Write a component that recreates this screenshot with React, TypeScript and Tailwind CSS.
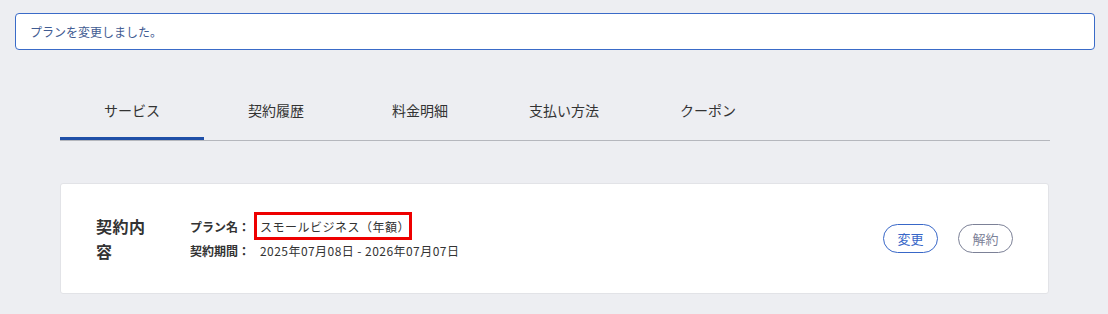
import React from 'react';

const tabs = ['サービス', '契約履歴', '料金明細', '支払い方法', 'クーポン'];

export default function App() {
  return (
    <div
      className="min-h-[314px] w-full bg-[#edeef2] pt-[13px] pl-[15px] pr-[13px] text-[#333]"
      style={{ fontFamily: '"Noto Sans CJK JP", "Noto Sans", sans-serif' }}
    >
      {/* 通知 */}
      <div className="flex h-[37px] items-center rounded-[4px] border border-[#3a6bc8] bg-white px-[14px] text-[12px] text-[#3f5b92]">
        プランを変更しました。
      </div>

      <div className="mx-[45px]">
        {/* タブ */}
        <div className="mt-[36px] flex border-b border-[#b5b7bd]">
          {tabs.map((t, i) => (
            <div
              key={t}
              className={
                i === 0
                  ? 'flex h-[54px] w-[144px] items-center justify-center border-b-[3px] border-[#1f4fa8] -mb-px pb-[2px] text-[14px] text-[#333]'
                  : 'flex h-[54px] w-[144px] items-center justify-center pb-[5px] text-[14px] text-[#333]'
              }
            >
              {t}
            </div>
          ))}
        </div>

        {/* 契約内容 */}
        <div className="mt-[42px] mr-[1px] flex h-[111px] items-center rounded-[3px] border border-[#e2e3e7] bg-white pl-[35px] pr-[35px]">
          <div className="w-[58px] text-[16px] font-bold leading-[25px] tracking-[0.5px] text-[#333]">契約内容</div>
          <div className="ml-[36px] flex flex-col text-[12px] leading-[24px]">
            <div className="flex">
              <span className="w-[70px] font-bold">プラン名：</span>
              <span className="relative tracking-[0.5px]">
                スモールビジネス（年額）
                <span className="absolute -top-[3px] -bottom-[1px] -left-[6px] -right-[2px] border-[3px] border-[#ee0000]"></span>
              </span>
            </div>
            <div className="flex">
              <span className="w-[70px] font-bold">契約期間：</span>
              <span className="tracking-[0.45px]">2025年07月08日 - 2026年07月07日</span>
            </div>
          </div>
          <div className="ml-auto flex gap-[20px]">
            <button className="h-[29px] w-[55px] rounded-full border border-[#3867c8] text-[13px] text-[#3867c8]">変更</button>
            <button className="h-[29px] w-[55px] rounded-full border border-[#7c8197] text-[13px] text-[#7c8197]">解約</button>
          </div>
        </div>
      </div>
    </div>
  );
}
